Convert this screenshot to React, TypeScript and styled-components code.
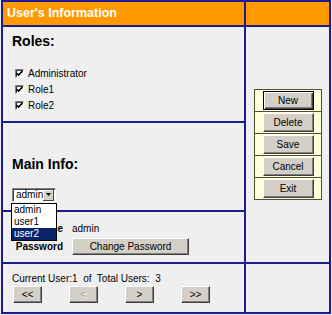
import React from "react";
import styled, { createGlobalStyle } from "styled-components";

const GlobalStyle = createGlobalStyle`
  body {
    margin: 0;
    background: #f0f0f0;
    font-family: "Liberation Sans", Arial, sans-serif;
    font-size: 10px;
    color: #000;
  }
`;

const NAVY = "#1c1c8e";

const Frame = styled.div`
  margin-left: 1px;
  width: 330px;
  box-sizing: border-box;
  border: 2px solid ${NAVY};
  background: ${NAVY};
  display: grid;
  grid-template-columns: 241px 83px;
  grid-template-rows: 23px 94px 87px 50px 48px;
  gap: 2px;
`;

const HeaderCell = styled.div`
  background: #ff9900;
  color: #fff;
  font-weight: bold;
  font-size: 12.5px;
  line-height: 23px;
  padding-left: 4px;
`;

const Cell = styled.div<{ $pt?: number }>`
  background: #efefef;
  padding: ${(p) => p.$pt ?? 0}px 0 0 9px;
  position: relative;
`;

const SideCell = styled.div`
  grid-column: 2;
  grid-row: 2 / 5;
  background: #efefef;
  display: flex;
  align-items: center;
  justify-content: center;
`;

const Heading = styled.div`
  font-size: 14px;
  font-weight: bold;
  line-height: 16px;
`;

const RoleList = styled.div`
  margin: 16px 0 0 3px;
`;

const RoleRow = styled.label`
  display: flex;
  align-items: center;
  height: 16px;
  gap: 4px;
`;

const Check = styled.span`
  width: 9px;
  height: 9px;
  box-sizing: border-box;
  background: #fff;
  border: 1px solid;
  border-color: #808080 #fff #fff #808080;
  box-shadow: inset 1px 1px #404040;
  display: flex;
  align-items: center;
  justify-content: center;
`;

const SelectWrap = styled.div`
  margin-top: 16px;
  position: relative;
  width: 44px;
`;

const SelectBox = styled.div`
  height: 14px;
  box-sizing: border-box;
  border: 1px solid;
  border-color: #808080 #fff #fff #808080;
  box-shadow: inset 1px 1px #404040;
  background: #fff;
  display: flex;
  align-items: center;
  padding-left: 3px;
  line-height: 12px;
`;

const SelectArrow = styled.span`
  margin-left: auto;
  width: 10px;
  height: 10px;
  background: #d4d0c8;
  border-right: 1px solid #404040;
  border-bottom: 1px solid #404040;
  box-shadow: inset 1px 1px #fff;
  display: flex;
  align-items: center;
  justify-content: center;
  margin-right: 1px;
`;

const ListBox = styled.div`
  position: absolute;
  top: 15px;
  left: -1px;
  width: 46px;
  box-sizing: border-box;
  border: 1px solid #000;
  background: #fff;
  z-index: 5;
`;

const ListItem = styled.div<{ $sel?: boolean }>`
  height: 12px;
  line-height: 12px;
  padding-left: 2px;
  background: ${(p) => (p.$sel ? "#0a246a" : "#fff")};
  color: ${(p) => (p.$sel ? "#fff" : "#000")};
`;

const InfoGrid = styled.div`
  margin-left: -9px;
  display: grid;
  grid-template-columns: 60px auto;
  grid-template-rows: 16px 18px;
  column-gap: 9px;
  row-gap: 1px;
  align-items: center;
`;

const Label = styled.div`
  text-align: right;
  font-weight: bold;
`;

const Btn = styled.button<{ $w: number; $h: number; $def?: boolean }>`
  width: ${(p) => p.$w}px;
  height: ${(p) => p.$h}px;
  padding: 0;
  font-family: inherit;
  font-size: 10px;
  color: ${(p) => (p.disabled ? "#a0a0a0" : "#000")};
  text-shadow: ${(p) => (p.disabled ? "1px 1px #fff" : "none")};
  background: #d4d0c8;
  border: 1px solid;
  border-color: ${(p) => (p.$def ? "#000" : "#fff #404040 #404040 #fff")};
  box-shadow: ${(p) =>
    p.$def
      ? "inset 1px 1px #fff, inset -1px -1px #404040, inset -2px -2px #808080"
      : "inset -1px -1px #808080"};
  cursor: default;
`;

const Panel = styled.div`
  display: flex;
  flex-direction: column;
  border: 1px solid #4e4e36;
  background: #ffffdc;
`;

const Slot = styled.div`
  padding: 1px 7px 1px 8px;
  & + & {
    border-top: 1px solid #4e4e36;
  }
`;

const NavText = styled.div`
  line-height: 12px;
  white-space: pre;
`;

const NavRow = styled.div`
  margin: 1px 0 0 1px;
  display: flex;
  gap: 27px;
`;

const roles = ["Administrator", "Role1", "Role2"];
const actions = ["New", "Delete", "Save", "Cancel", "Exit"];

export default function App() {
  return (
    <>
      <GlobalStyle />
      <Frame>
        <HeaderCell>User's Information</HeaderCell>
        <HeaderCell />

        <Cell $pt={6}>
          <Heading>Roles:</Heading>
          <RoleList>
            {roles.map((r) => (
              <RoleRow key={r}>
                <Check>
                  <svg width="7" height="7" viewBox="0 0 7 7">
                    <path d="M0.5 3 L2.5 5 L6.5 1" stroke="#000" strokeWidth="1.6" fill="none" />
                  </svg>
                </Check>
                {r}
              </RoleRow>
            ))}
          </RoleList>
        </Cell>

        <Cell $pt={33}>
          <Heading>Main Info:</Heading>
          <SelectWrap>
            <SelectBox>
              admin
              <SelectArrow>
                <svg width="5" height="3" viewBox="0 0 5 3">
                  <path d="M0 0 H5 L2.5 3 Z" fill="#000" />
                </svg>
              </SelectArrow>
            </SelectBox>
            <ListBox>
              <ListItem>admin</ListItem>
              <ListItem>user1</ListItem>
              <ListItem $sel>user2</ListItem>
            </ListBox>
          </SelectWrap>
        </Cell>

        <Cell $pt={8}>
          <InfoGrid>
            <Label>Username</Label>
            <div>admin</div>
            <Label>Password</Label>
            <div>
              <Btn $w={117} $h={17}>Change Password</Btn>
            </div>
          </InfoGrid>
        </Cell>

        <SideCell>
          <Panel>
            {actions.map((a, i) => (
              <Slot key={a}>
                <Btn $w={51} $h={19} $def={i === 0}>
                  {a}
                </Btn>
              </Slot>
            ))}
          </Panel>
        </SideCell>

        <Cell $pt={9}>
          <NavText>Current User:1  of  Total Users:  3</NavText>
          <NavRow>
            <Btn $w={29} $h={17}>&lt;&lt;</Btn>
            <Btn $w={29} $h={17} disabled>&lt;</Btn>
            <Btn $w={29} $h={17}>&gt;</Btn>
            <Btn $w={29} $h={17}>&gt;&gt;</Btn>
          </NavRow>
        </Cell>
        <Cell />
      </Frame>
    </>
  );
}
